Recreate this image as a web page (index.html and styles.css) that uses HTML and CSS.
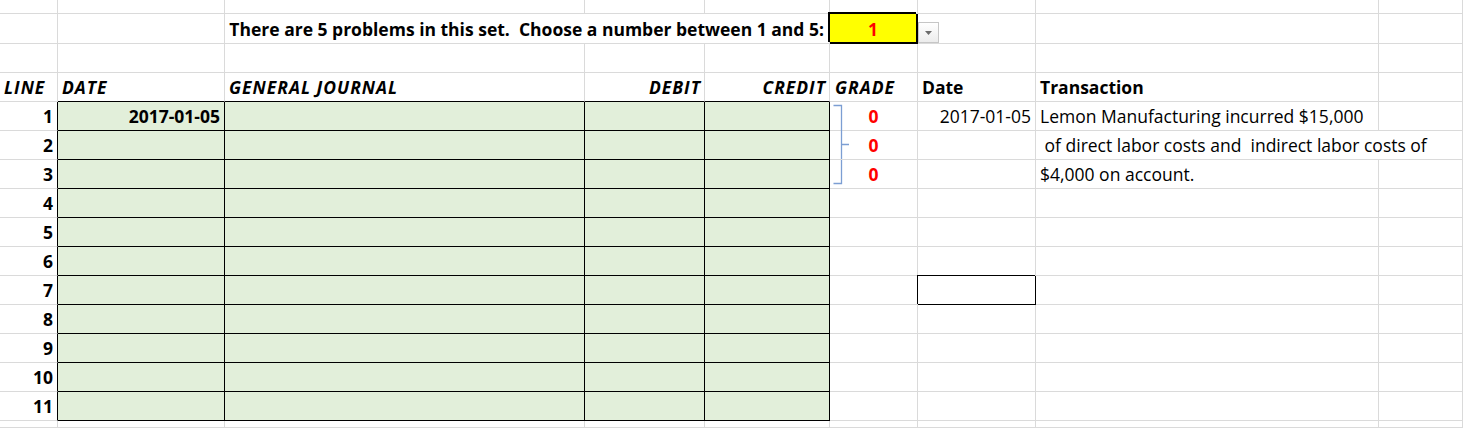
FILE: index.html
```html
<!DOCTYPE html>
<html>
<head>
<meta charset="utf-8">
<link rel="stylesheet" href="styles.css">
</head>
<body>
<div class="sheet">
  <!-- row 0 -->
  <div class="c"></div><div class="c"></div><div class="c"></div><div class="c"></div><div class="c"></div><div class="c"></div><div class="c"></div><div class="c"></div><div class="c"></div>
  <!-- row 1 -->
  <div class="c"></div><div class="c"></div>
  <div class="c span3 r b title">There are 5 problems in this set.&nbsp; Choose a number between 1 and 5:</div>
  <div class="c pick">1</div>
  <div class="c dd-cell"><span class="dd"><svg width="7" height="4" viewBox="0 0 7 4"><path d="M0 0H7L3.5 4Z" fill="#6b6b6b"/></svg></span></div>
  <div class="c"></div><div class="c"></div>
  <!-- row 2 -->
  <div class="c"></div><div class="c"></div><div class="c"></div><div class="c"></div><div class="c"></div><div class="c"></div><div class="c"></div><div class="c"></div><div class="c"></div>
  <!-- row 3 headers -->
  <div class="c bi">LINE</div>
  <div class="c bi topj">DATE</div>
  <div class="c bi topj">GENERAL JOURNAL</div>
  <div class="c bi r topj">DEBIT</div>
  <div class="c bi r topj">CREDIT</div>
  <div class="c bi grade-h">GRADE</div>
  <div class="c b">Date</div>
  <div class="c b">Transaction</div>
  <div class="c"></div>
  <!-- journal row 1 -->
  <div class="c b r num">1</div>
  <div class="c j b r">2017-01-05</div><div class="c j"></div><div class="c j"></div><div class="c j"></div>
  <div class="c zero br-cell">0<svg class="brace" width="20" height="82" viewBox="0 0 20 82"><path d="M1.5 1.5H9.5V79.5H1.5M9.5 40.5H17" fill="none" stroke="#7c9ed3" stroke-width="1.3"/></svg></div>
  <div class="c r">2017-01-05</div>
  <div class="c txt">Lemon Manufacturing incurred $15,000</div>
  <div class="c"></div>
  <!-- journal row 2 -->
  <div class="c b r num">2</div>
  <div class="c j"></div><div class="c j"></div><div class="c j"></div><div class="c j"></div>
  <div class="c zero">0</div>
  <div class="c"></div>
  <div class="c span2 txt pre"> of direct labor costs and  indirect labor costs of</div>
  <!-- journal row 3 -->
  <div class="c b r num">3</div>
  <div class="c j"></div><div class="c j"></div><div class="c j"></div><div class="c j"></div>
  <div class="c zero">0</div>
  <div class="c"></div>
  <div class="c txt">$4,000 on account.</div>
  <div class="c"></div>
  <!-- journal row 4 -->
  <div class="c b r num">4</div>
  <div class="c j"></div><div class="c j"></div><div class="c j"></div><div class="c j"></div>
  <div class="c"></div><div class="c"></div><div class="c"></div><div class="c"></div>
  <!-- journal row 5 -->
  <div class="c b r num">5</div>
  <div class="c j"></div><div class="c j"></div><div class="c j"></div><div class="c j"></div>
  <div class="c"></div><div class="c"></div><div class="c"></div><div class="c"></div>
  <!-- journal row 6 -->
  <div class="c b r num">6</div>
  <div class="c j"></div><div class="c j"></div><div class="c j"></div><div class="c j"></div>
  <div class="c"></div><div class="c"></div><div class="c"></div><div class="c"></div>
  <!-- journal row 7 -->
  <div class="c b r num">7</div>
  <div class="c j"></div><div class="c j"></div><div class="c j"></div><div class="c j"></div>
  <div class="c"></div><div class="c boxed"></div><div class="c"></div><div class="c"></div>
  <!-- journal row 8 -->
  <div class="c b r num">8</div>
  <div class="c j"></div><div class="c j"></div><div class="c j"></div><div class="c j"></div>
  <div class="c"></div><div class="c"></div><div class="c"></div><div class="c"></div>
  <!-- journal row 9 -->
  <div class="c b r num">9</div>
  <div class="c j"></div><div class="c j"></div><div class="c j"></div><div class="c j"></div>
  <div class="c"></div><div class="c"></div><div class="c"></div><div class="c"></div>
  <!-- journal row 10 -->
  <div class="c b r num">10</div>
  <div class="c j"></div><div class="c j"></div><div class="c j"></div><div class="c j"></div>
  <div class="c"></div><div class="c"></div><div class="c"></div><div class="c"></div>
  <!-- journal row 11 -->
  <div class="c b r num">11</div>
  <div class="c j"></div><div class="c j"></div><div class="c j"></div><div class="c j"></div>
  <div class="c"></div><div class="c"></div><div class="c"></div><div class="c"></div>
  <!-- row after -->
  <div class="c"></div><div class="c"></div><div class="c"></div><div class="c"></div><div class="c"></div><div class="c"></div><div class="c"></div><div class="c"></div><div class="c"></div>
</div>
</body>
</html>
```
FILE: styles.css
```css
html, body {
  margin: 0;
  padding: 0;
  background: #ffffff;
}
body {
  width: 1463px;
  height: 428px;
  overflow: hidden;
  font-family: "Open Sans", "Noto Sans", "Liberation Sans", sans-serif;
  font-size: 17.5px;
  color: #000;
}
.sheet {
  display: grid;
  grid-template-columns: 58px 167px 360px 120px 125px 88px 118px 343px 1fr;
  grid-template-rows: 14px 30px 29px 29px repeat(11, 29px) 1fr;
  height: 428px;
}
.c {
  box-sizing: border-box;
  border-right: 1px solid #dadada;
  border-bottom: 1px solid #dadada;
  display: flex;
  align-items: flex-end;
  padding: 0 4px 3px 4px;
  line-height: 22px;
  white-space: nowrap;
  min-width: 0;
  position: relative;
}
.span3 { grid-column: span 3; }
.span2 { grid-column: span 2; }
.r { justify-content: flex-end; }
.b { font-weight: 700; }
.bi { font-weight: 700; font-style: italic; letter-spacing: 1px; }
.bi.r { padding-right: 3px; }
.pre { white-space: pre; }
.title { padding-right: 5px; }
.topj { border-bottom-color: #000; }
.num { border-right-color: #000; padding-right: 4px; }
.j {
  background: #e2efda;
  border-right: 1px solid #000;
  border-bottom: 1px solid #000;
}
.pick {
  background: #ffff00;
  color: #ff0000;
  font-weight: 700;
  justify-content: center;
  border-right: 2px solid #000;
  border-bottom: 2px solid #000;
  box-shadow: -2px -2px 0 #000;
  padding-bottom: 2px;
}
.dd-cell { overflow: visible; }
.dd {
  position: absolute;
  left: 0;
  top: 8px;
  width: 21px;
  height: 21px;
  box-sizing: border-box;
  border: 1px solid #c6c6c6;
  background: linear-gradient(#ffffff, #ececec);
  display: flex;
  align-items: center;
  justify-content: center;
}
.grade-h { padding-left: 5px; }
.zero {
  color: #ff0000;
  font-weight: 700;
  justify-content: center;
  padding-left: 0;
  padding-right: 0;
}
.br-cell { overflow: visible; }
.brace {
  position: absolute;
  left: 2px;
  top: 2px;
}
.txt { padding-left: 4px; }
.boxed {
  border-right-color: #000;
  border-bottom-color: #000;
  box-shadow: -1px -1px 0 #000;
}
```
